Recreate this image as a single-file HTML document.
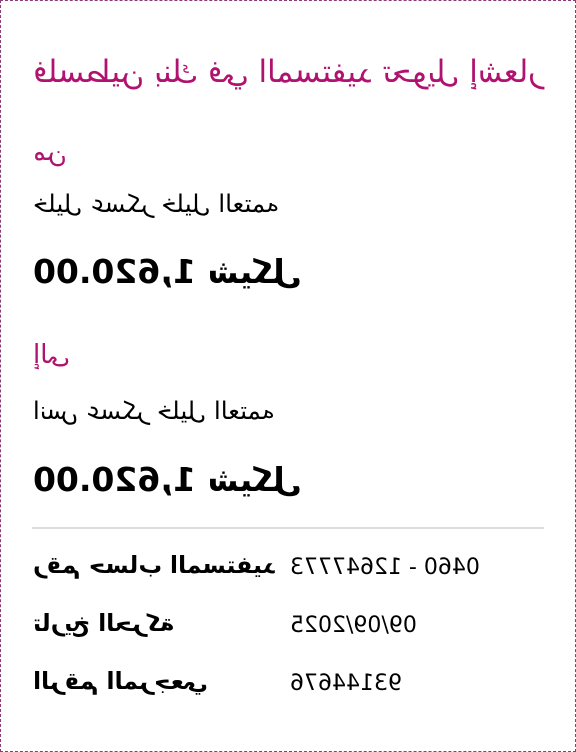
<!DOCTYPE html>
<html><head><meta charset="utf-8"><style>
html,body{margin:0;padding:0;background:#fff;}
body{width:576px;height:752px;position:relative;overflow:hidden;font-family:"DejaVu Sans","Liberation Sans",sans-serif;}
.frame{position:absolute;left:0;top:0;width:574px;height:750px;border:1px dashed #8a3b78;}
.t{position:absolute;display:inline-block;transform:scaleX(-1);direction:rtl;white-space:nowrap;line-height:1;}
.v{position:absolute;display:inline-block;transform:scaleX(-1);direction:ltr;unicode-bidi:bidi-override;white-space:nowrap;line-height:1;font-size:22px;}
.p{color:#b0136f;}
.hr{position:absolute;left:32px;top:527px;width:512px;height:2px;background:#dcdcdc;}
</style></head><body>
<div class="frame"></div>
<div class="t p" style="left:33px;top:57px;font-size:31px;">فلسطين بنك في المستفيد تحويل إشعار</div>
<div class="t p" style="left:33px;top:139px;font-size:26px;">من</div>
<div class="t" style="left:33px;top:192px;font-size:24.5px;">خليل عسكر خليل العتمه</div>
<div class="t" style="left:33px;top:255px;font-size:33px;font-weight:bold;">1,620.00 شيكل</div>
<div class="t p" style="left:33px;top:342px;font-size:26px;">إلى</div>
<div class="t" style="left:33px;top:399px;font-size:24.5px;">انس عسكر خليل العتمه</div>
<div class="t" style="left:33px;top:463px;font-size:33px;font-weight:bold;">1,620.00 شيكل</div>
<div class="hr"></div>
<div class="t" style="left:33px;top:554px;font-size:23.5px;font-weight:bold;">رقم حساب المستفيد</div>
<div class="v" style="left:290px;top:557px;">0460 - 12647773</div>
<div class="t" style="left:33px;top:612px;font-size:23.5px;font-weight:bold;">تاريخ الحركة</div>
<div class="v" style="left:290px;top:615px;">09/09/2025</div>
<div class="t" style="left:33px;top:670px;font-size:23.5px;font-weight:bold;">الرقم المرجعي</div>
<div class="v" style="left:290px;top:673px;">93144676</div>
</body></html>
